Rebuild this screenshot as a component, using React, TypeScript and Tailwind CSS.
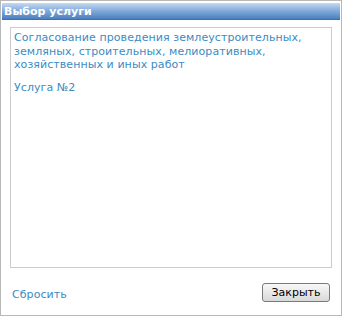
import React from "react";

export default function App() {
  const font = { fontFamily: 'Verdana, "DejaVu Sans", sans-serif' };
  return (
    <div className="w-[342px] h-[316px] bg-white" style={font}>
      <div className="w-full h-full border border-[#b8b8b8] bg-white flex flex-col px-[1px] pt-[2px]">
        <div className="h-[17px] flex items-center px-[2px] bg-gradient-to-b from-[#c3daf2] via-[#7fa9da] to-[#4b7fc0] border-b border-[#3f6fa8]">
          <span className="text-white font-bold text-[11px] leading-none" style={{ fontFamily: 'Tahoma, "DejaVu Sans", sans-serif' }}>
            Выбор услуги
          </span>
        </div>
        <div className="flex-1 flex flex-col px-[8px] pt-[7px]">
          <div className="h-[241px] border border-[#cccccc] px-[3px] pt-[3px] text-[11px] leading-[13.5px] tracking-[0.07px] text-[#3a8bc4]">
            <div>
              Согласование проведения землеустроительных, земляных, строительных, мелиоративных, хозяйственных и иных работ
            </div>
            <div className="mt-[9px]">Услуга №2</div>
          </div>
          <div className="flex items-start justify-between mt-[15px] pl-[2px] pr-[2px]">
            <span className="text-[11px] text-[#3a8bc4] leading-[13px] mt-[5px] tracking-[0.07px]">Сбросить</span>
            <button className="w-[68px] h-[19px] rounded-[3px] border border-[#7a7a7a] bg-gradient-to-b from-[#f8f8f8] to-[#d9d9d9] text-[11px] text-black leading-none">
              Закрыть
            </button>
          </div>
        </div>
      </div>
    </div>
  );
}
